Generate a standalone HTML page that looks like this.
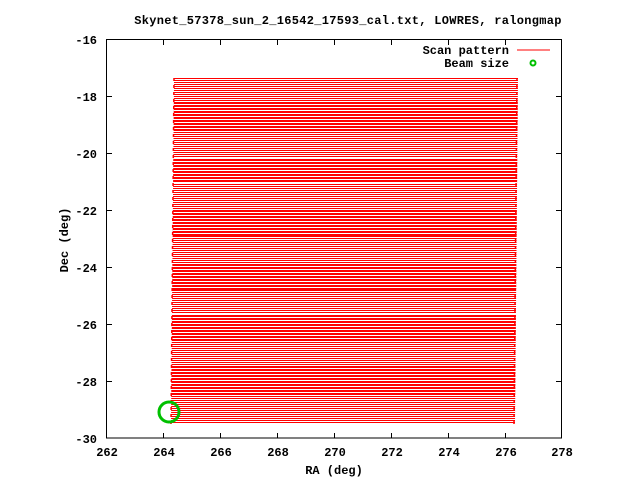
<!DOCTYPE html>
<html><head><style>
body{margin:0;background:#fff;width:640px;height:480px;overflow:hidden}
svg{display:block}
text{font-family:"Liberation Mono",monospace;font-weight:bold;font-size:12px;fill:#000}
</style></head><body>
<svg width="640" height="480" xmlns="http://www.w3.org/2000/svg">
<defs>
<pattern id="g" width="640" height="2" patternUnits="userSpaceOnUse" y="78">
<rect x="0" y="0" width="640" height="1" fill="#f00"/>
</pattern>
<pattern id="r" width="640" height="3" patternUnits="userSpaceOnUse" y="78">
<rect x="0" y="0" width="640" height="2" fill="#f00"/>
</pattern>
<clipPath id="c"><polygon points="174,78 518,78 515,424 171,424"/></clipPath>
</defs>
<g clip-path="url(#c)">
<rect x="160" y="78" width="370" height="346" fill="url(#g)"/>
<rect x="160" y="101" width="370" height="29" fill="#fff"/><rect x="160" y="101" width="370" height="29" fill="url(#r)"/>
<rect x="160" y="158" width="370" height="25" fill="#fff"/><rect x="160" y="158" width="370" height="25" fill="url(#r)"/>
<rect x="160" y="210" width="370" height="26" fill="#fff"/><rect x="160" y="210" width="370" height="26" fill="url(#r)"/>
<rect x="160" y="262" width="370" height="28" fill="#fff"/><rect x="160" y="262" width="370" height="28" fill="url(#r)"/>
<rect x="160" y="314" width="370" height="27" fill="#fff"/><rect x="160" y="314" width="370" height="27" fill="url(#r)"/>
<rect x="160" y="367" width="370" height="27" fill="#fff"/><rect x="160" y="367" width="370" height="27" fill="url(#r)"/>
</g>
<line x1="174" y1="78" x2="171" y2="424" stroke="#f00" stroke-width="1.5" stroke-dasharray="3 4"/>
<line x1="517" y1="78" x2="514" y2="424" stroke="#f00" stroke-width="1.5" stroke-dasharray="3 4"/>
<circle cx="169" cy="412" r="10" fill="none" stroke="#00c000" stroke-width="3"/>
<rect x="106.5" y="39.5" width="455" height="398.5" fill="none" stroke="#000" stroke-width="1"/>
<g stroke="#000" stroke-width="1">
<path d="M107,96.5h5M107,153.5h5M107,210.5h5M107,267.5h5M107,324.5h5M107,381.5h5
M561,96.5h-5M561,153.5h-5M561,210.5h-5M561,267.5h-5M561,324.5h-5M561,381.5h-5
M163.5,438v-5M220.5,438v-5M277.5,438v-5M334.5,438v-5M391.5,438v-5M448.5,438v-5M505.5,438v-5
M163.5,40v5M220.5,40v5M277.5,40v5M334.5,40v5M391.5,40v5M448.5,40v5M505.5,40v5"/>
</g>
<g text-anchor="end">
<text x="97" y="44">-16</text>
<text x="97" y="101">-18</text>
<text x="97" y="158">-20</text>
<text x="97" y="215">-22</text>
<text x="97" y="272">-24</text>
<text x="97" y="329">-26</text>
<text x="97" y="386">-28</text>
<text x="97" y="443">-30</text>
</g>
<g text-anchor="middle">
<text x="107" y="456">262</text>
<text x="164" y="456">264</text>
<text x="221" y="456">266</text>
<text x="278" y="456">268</text>
<text x="335" y="456">270</text>
<text x="392" y="456">272</text>
<text x="449" y="456">274</text>
<text x="506" y="456">276</text>
<text x="562" y="456">278</text>
<text x="334" y="474">RA (deg)</text>
<text x="348" y="24" style="letter-spacing:0.3px">Skynet_57378_sun_2_16542_17593_cal.txt, LOWRES, ralongmap</text>
<text transform="translate(68,240) rotate(-90)">Dec (deg)</text>
</g>
<g text-anchor="end">
<text x="509" y="54">Scan pattern</text>
<text x="509" y="67">Beam size</text>
</g>
<line x1="517" y1="50" x2="550" y2="50" stroke="#f00" stroke-width="1"/>
<circle cx="533" cy="63" r="2.5" fill="none" stroke="#00c000" stroke-width="2"/>
</svg>
</body></html>
